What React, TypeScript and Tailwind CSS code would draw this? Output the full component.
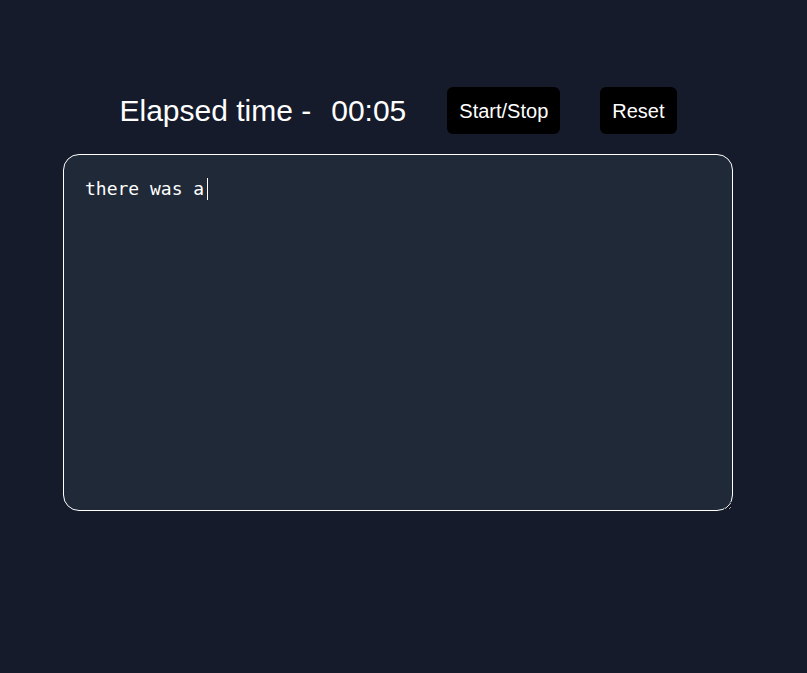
import React from 'react'

function TimerBar() {
  return (
    <div className="flex items-center justify-center h-[47px]">
      <div className="flex items-center text-[30px] text-white">
        <span>Elapsed time -</span>
        <span className="ml-[20px]">00:05</span>
      </div>
      <button className="ml-[41px] h-[47px] px-3 bg-black text-white text-xl rounded-md">Start/Stop</button>
      <button className="ml-[40px] h-[47px] px-3 bg-black text-white text-xl rounded-md">Reset</button>
    </div>
  )
}

export default function App() {
  return (
    <div
      className="min-h-screen bg-[#151b2b] pt-[87px] pl-[63px]"
      style={{ fontFamily: '"Liberation Sans", Arial, sans-serif' }}
    >
      <div className="w-[670px] flex flex-col gap-[20px]">
        <TimerBar />
        <div className="relative">
          <textarea
            defaultValue="there was a"
            className="block h-[357px] w-full bg-[#1f2937] text-white text-lg border border-white rounded-2xl px-[21px] py-[20px] outline-none caret-white"
            style={{ fontFamily: '"DejaVu Sans Mono", monospace' }}
          />
          {/* caret */}
          <span className="absolute left-[144px] top-[24px] h-[22px] w-px bg-white" />
        </div>
      </div>
    </div>
  )
}
